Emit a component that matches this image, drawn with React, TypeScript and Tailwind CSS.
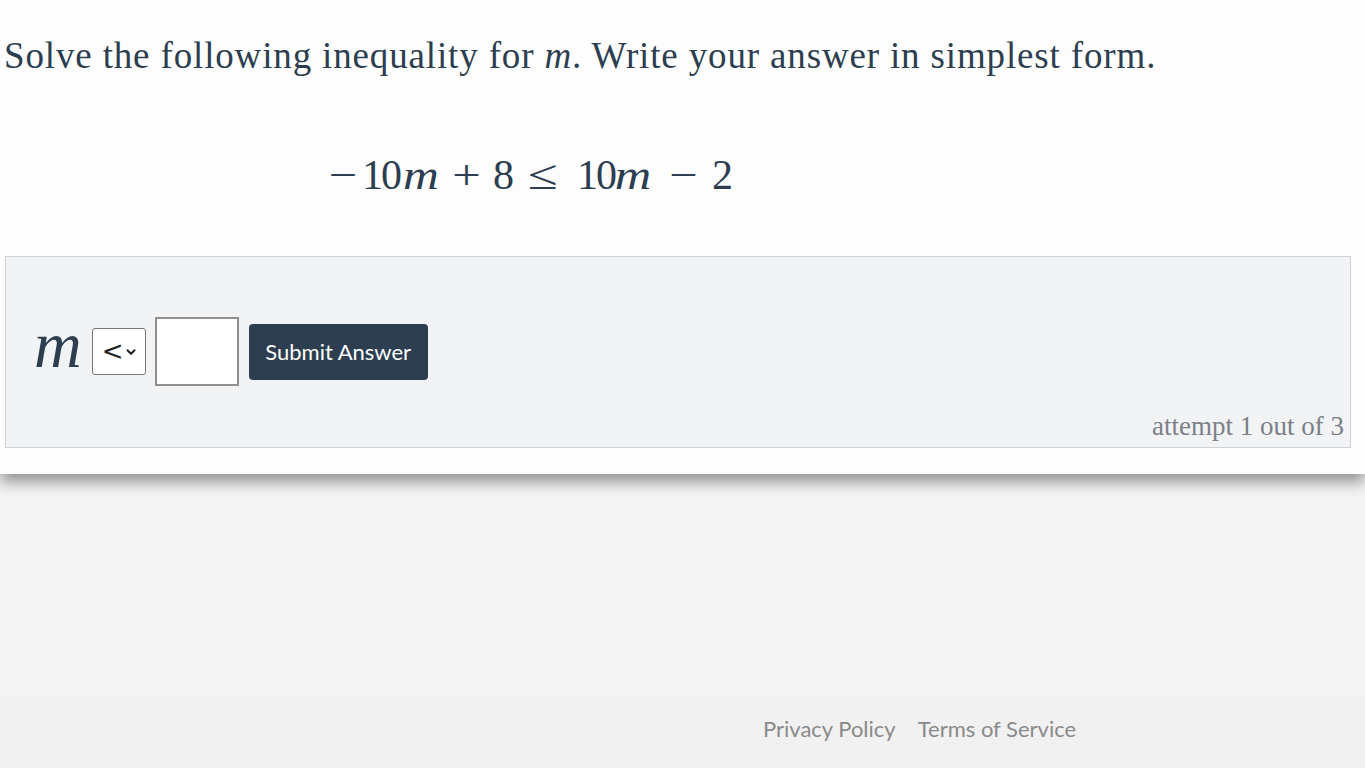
import { ChevronDown } from "lucide-react";

const serif = "font-['Liberation_Serif',Georgia,serif]";

function Equation() {
  return (
    <div className={`${serif} text-[42px] text-[#2c3e50] leading-none flex items-baseline`}>
      <span className="inline-block w-[26px] text-center scale-x-[1.2]">−</span>
      <span className="inline-block w-[38px] ml-[6px] text-center tracking-[-2px]">10</span>
      <span className="inline-block w-[36px] ml-[3px] text-center italic scale-x-[1.18]">m</span>
      <span className="inline-block w-[27px] ml-[14px] text-center scale-x-[1.2]">+</span>
      <span className="inline-block w-[20px] ml-[13px] text-center">8</span>
      <span className="inline-block w-[29px] ml-[15px] text-center scale-x-[1.3]">≤</span>
      <span className="inline-block w-[36px] ml-[20px] text-center tracking-[-2px]">10</span>
      <span className="inline-block w-[38px] ml-[1px] text-center italic scale-x-[1.2]">m</span>
      <span className="inline-block w-[27px] ml-[18px] text-center scale-x-[1.2]">−</span>
      <span className="inline-block w-[18px] ml-[15px] text-center">2</span>
    </div>
  );
}

function AnswerPanel() {
  return (
    <div className="ml-[5px] mr-[14px] border border-[#cfd1d4] bg-[#f2f3f5] h-[192px] flex flex-col">
      <div className="flex items-center pl-[28px] pt-[60px]">
        <span className={`${serif} italic text-[66px] leading-none text-[#2c3e50] mr-[10px] -mt-[14px]`}>m</span>
        <div className="w-[54px] h-[47px] border border-[#767676] rounded-[3px] bg-white flex items-center pl-[9px] gap-[1px]">
          <span className="font-['DejaVu_Sans',sans-serif] text-[26px] text-[#222] leading-none -mt-[2px]">&lt;</span>
          <ChevronDown className="w-[14px] h-[14px] text-[#222]" strokeWidth={3.5} />
        </div>
        <div className="ml-[9px] w-[84px] h-[69px] border-2 border-[#8f8f8f] bg-white" />
        <button
          type="button"
          className="ml-[10px] w-[179px] h-[56px] rounded-[4px] bg-[#2c3e50] text-white font-['Lato',sans-serif] text-[22px]"
        >
          Submit Answer
        </button>
      </div>
      <div className={`${serif} mt-auto mb-[7px] pr-[6px] text-right text-[27px] text-[#7b8088] leading-none`}>
        attempt 1 out of 3
      </div>
    </div>
  );
}

export default function App() {
  return (
    <div className="min-h-[768px] bg-[#f4f4f4] flex flex-col">
      <div className="bg-[#fdfdfd] h-[474px] shadow-[0_8px_14px_rgba(0,0,0,0.4)] relative">
        <p className={`${serif} text-[37px] tracking-[0.85px] text-[#2c3e50] leading-none pl-[4px] pt-[37px] h-[74px]`}>
          Solve the following inequality for <span className="italic">m</span>. Write your answer in simplest form.
        </p>
        <div className="pl-[330px] pt-[80px] h-[182px]">
          <Equation />
        </div>
        <AnswerPanel />
      </div>
      <div className="mt-auto h-[71px] bg-[#f1f1f1] flex items-center pl-[763px] gap-[22px] font-['Lato',sans-serif] text-[22px] text-[#8a8a8a] pb-[8px]">
        <span>Privacy Policy</span>
        <span>Terms of Service</span>
      </div>
    </div>
  );
}
